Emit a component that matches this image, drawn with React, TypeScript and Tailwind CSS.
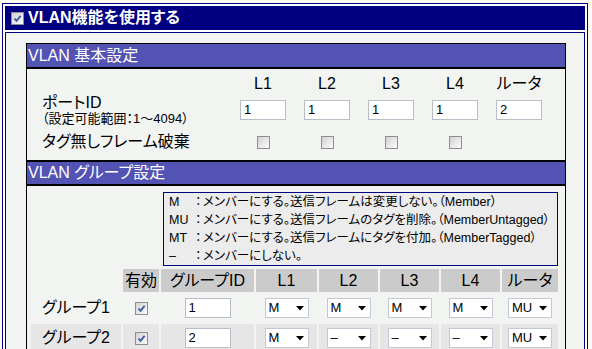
import React from "react";

type Member = "M" | "MU" | "MT" | "-";

interface Group {
  name: string;
  enabled: boolean;
  id: string;
  ports: Member[];
}

const PORTS = ["L1", "L2", "L3", "L4", "ルータ"];

const GROUPS: Group[] = [
  { name: "グループ1", enabled: true, id: "1", ports: ["M", "M", "M", "M", "MU"] },
  { name: "グループ2", enabled: true, id: "2", ports: ["M", "-", "-", "-", "MU"] },
];

const LEGEND = [
  { code: "M", text: "メンバーにする。送信フレームは変更しない。（Member）" },
  { code: "MU", text: "メンバーにする。送信フレームのタグを削除。（MemberUntagged）" },
  { code: "MT", text: "メンバーにする。送信フレームにタグを付加。（MemberTagged）" },
  { code: "–", text: "メンバーにしない。" },
];

// group table column widths (label, enabled, id, L1..L4, router)
const COLS = ["w-[90px]", "w-[36px]", "w-[93px]", "w-[61px]", "w-[59px]", "w-[59px]", "w-[59px]", "w-[56px]"];

function CheckBox({ checked }: { checked: boolean }) {
  return (
    <div className="relative w-[13px] h-[13px] border border-[#8e8e8e] bg-gradient-to-br from-[#d2d2d2] to-[#fbfbfb]">
      {checked && (
        <svg viewBox="0 0 11 11" className="absolute inset-0 w-[11px] h-[11px]">
          <path d="M2.5 5.5 L4.5 7.8 L8.6 2.8" fill="none" stroke="#3b5da8" strokeWidth="1.9" />
        </svg>
      )}
    </div>
  );
}

function TextBox({ value, width = "w-[46px]" }: { value: string; width?: string }) {
  return (
    <div className={`${width} h-[20px] bg-white border border-[#b8bdc8] pl-[3px] text-[13px] leading-[18px] text-black`}>
      {value}
    </div>
  );
}

function SelectBox({ value }: { value: Member }) {
  return (
    <div className="w-[44px] h-[20px] bg-white border border-[#c3c8d4] flex items-center justify-between pl-[3px] pr-[4px] text-[13px] text-black">
      <span>{value === "-" ? "–" : value}</span>
      <svg viewBox="0 0 8 5" className="w-[8px] h-[5px]">
        <polygon points="0,0 8,0 4,4.5" fill="#000" />
      </svg>
    </div>
  );
}

function SectionHeader({ title }: { title: string }) {
  return (
    <div className="h-[22px] bg-[#5353b3] text-white text-[16px] leading-[22px] pl-[1px]">{title}</div>
  );
}

export default function App() {
  return (
    <div className="w-[592px] h-[349px] overflow-hidden bg-[#fbfbf3] pt-[3px] pl-[2px] text-black font-['Liberation_Sans','Noto_Sans_CJK_JP',sans-serif] [font-feature-settings:'palt']">
      <div className="w-[586px] border border-[#000080] bg-white p-[2px]">
        {/* Title bar */}
        <div className="h-[24px] bg-[#000080] flex items-center pl-[6px] gap-[4px]">
          <div className="bg-[#eef1f6]">
            <CheckBox checked />
          </div>
          <span className="text-white font-bold text-[16px] leading-[24px]">VLAN機能を使用する</span>
        </div>

        <div className="mt-[2px] h-[330px] border border-[#000080] bg-[#f2f4f2] pt-[10px] pl-[20px]">
          <div className="w-[540px] border border-black">
            {/* Basic settings */}
            <div className="border-b-2 border-black">
              <div className="h-[23px] bg-[#5353b3] text-white text-[16px] leading-[23px] pl-[1px]">VLAN 基本設定</div>
            </div>
            <div className="h-[91px] pt-[6px] text-[16px]">
              <div className="flex h-[18px] items-center">
                <div className="w-[204px]" />
                {PORTS.map((p) => (
                  <div key={p} className="w-[64px] text-center leading-[18px]">
                    {p}
                  </div>
                ))}
              </div>
              <div className="flex h-[34px] items-center">
                <div className="w-[204px] pl-[15px]">
                  <div className="leading-[17px]">ポートID</div>
                  <div className="text-[13px] leading-[15px]">（設定可能範囲：1〜4094）</div>
                </div>
                {["1", "1", "1", "1", "2"].map((v, i) => (
                  <div key={i} className="w-[64px] flex justify-center">
                    <TextBox value={v} />
                  </div>
                ))}
              </div>
              <div className="flex h-[30px] items-center">
                <div className="w-[204px] pl-[15px] leading-[18px]">タグ無しフレーム破棄</div>
                {[0, 1, 2, 3].map((i) => (
                  <div key={i} className="w-[64px] flex justify-center">
                    <CheckBox checked={false} />
                  </div>
                ))}
              </div>
            </div>

            {/* Group settings */}
            <div className="border-y-2 border-black">
              <SectionHeader title="VLAN グループ設定" />
            </div>
            <div className="h-[200px] pt-[6px] pl-[4px]">
              <div className="ml-[132px] w-[395px] h-[74px] border border-[#000080] bg-[#ececec] pl-[5px] text-[12.5px] leading-[18px] whitespace-nowrap overflow-hidden">
                {LEGEND.map((l) => (
                  <div key={l.code} className="flex">
                    <span className="w-[26px]">{l.code}</span>
                    <span className="w-[8px]">：</span>
                    <span>{l.text}</span>
                  </div>
                ))}
              </div>

              <div className="mt-[3px] flex flex-col gap-[2px]">
                <div className="flex gap-[2px] h-[23px] text-[16px]">
                  <div className={COLS[0]} />
                  {["有効", "グループID", ...PORTS].map((h, i) => (
                    <div key={h} className={`${COLS[i + 1]} bg-[#cbcbcb] flex items-center justify-center`}>
                      {h}
                    </div>
                  ))}
                </div>
                {GROUPS.map((g, r) => {
                  const bg = r % 2 === 1 ? "bg-[#e6e6e6]" : "";
                  return (
                    <div key={g.name} className="flex gap-[2px] h-[28px] text-[16px]">
                      <div className={`${COLS[0]} ${bg} flex items-center justify-center`}>{g.name}</div>
                      <div className={`${COLS[1]} ${bg} flex items-center justify-center`}>
                        <CheckBox checked={g.enabled} />
                      </div>
                      <div className={`${COLS[2]} ${bg} flex items-center justify-center`}>
                        <TextBox value={g.id} />
                      </div>
                      {g.ports.map((m, i) => (
                        <div key={i} className={`${COLS[i + 3]} ${bg} flex items-center justify-center`}>
                          <SelectBox value={m} />
                        </div>
                      ))}
                    </div>
                  );
                })}
              </div>
            </div>
          </div>
        </div>
      </div>
    </div>
  );
}
